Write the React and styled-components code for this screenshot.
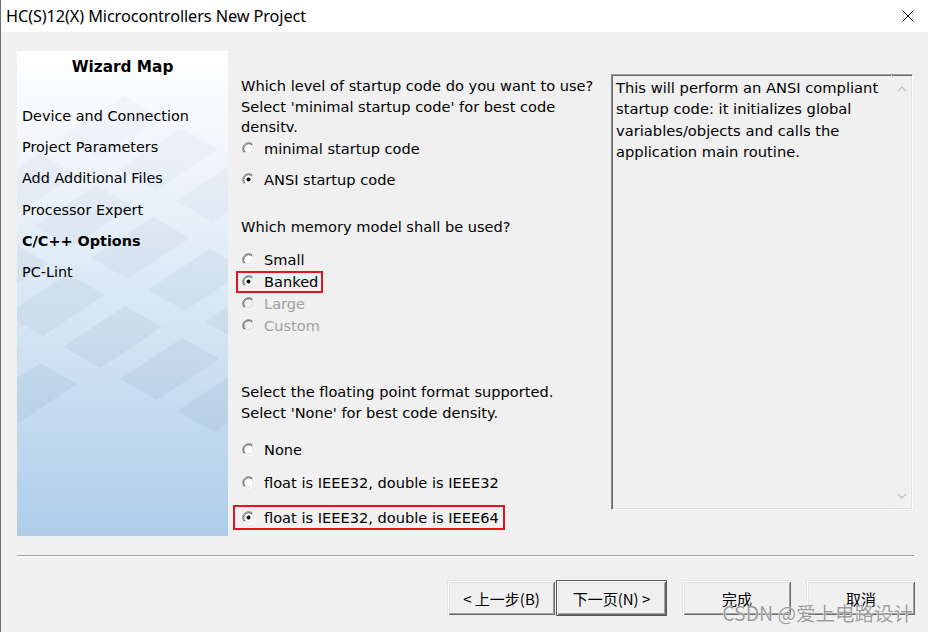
import React from "react";
import styled, { createGlobalStyle } from "styled-components";

const GlobalStyle = createGlobalStyle`
  html, body {
    margin: 0;
    padding: 0;
    background: #f0f0f0;
  }
  body {
    font-family: "DejaVu Sans", "Noto Sans CJK SC", sans-serif;
  }
`;

const Radio = ({ checked, disabled }) => (
  <svg width="13" height="13" viewBox="0 0 13 13">
    <circle cx="6.5" cy="6.5" r="6" fill={disabled ? "#f0f0f0" : "#fff"} />
    <path d="M2.26 10.74 A6 6 0 0 1 10.74 2.26" stroke="#8c8c8c" fill="none" />
    <path d="M2.97 10.03 A5 5 0 0 1 10.03 2.97" stroke="#4f4f4f" fill="none" />
    <path d="M10.74 2.26 A6 6 0 0 1 2.26 10.74" stroke="#ffffff" fill="none" />
    <path d="M10.03 2.97 A5 5 0 0 1 2.97 10.03" stroke="#d8d8d8" fill="none" />
    {checked && <circle cx="6.5" cy="6.5" r="2" fill={disabled ? "#a0a0a0" : "#000"} />}
  </svg>
);

// lattice of faint parallelograms drawn on the wizard map panel
const tiles = [];
for (let i = -4; i <= 4; i++) {
  for (let j = -5; j <= 3; j++) {
    const x = 108 + 57 * i - 85 * j;
    const y = 255 + 32 * i + 57 * j;
    if (y < 40 || y > 330 || x < -60 || x > 260) continue;
    const pts = [
      [x, y],
      [x + 37, y + 21],
      [x + 37 - 62, y + 21 + 41],
      [x - 62, y + 41],
    ]
      .map((p) => p.join(","))
      .join(" ");
    const op = 0.04 + Math.min(1, Math.max(0, (y - 40) / 260)) * 0.06;
    tiles.push(<polygon key={`${i}_${j}`} points={pts} fillOpacity={op} />);
  }
}

export default function App() {
  return (
    <>
      <GlobalStyle />
      <Window>
        <TitleBar>
          <Title>HC(S)12(X) Microcontrollers New Project</Title>
          <CloseBtn>
            <svg width="12" height="12" viewBox="0 0 12 12">
              <path d="M0.5 0.5 L11.5 11.5 M11.5 0.5 L0.5 11.5" stroke="#000" strokeWidth="1" />
            </svg>
          </CloseBtn>
        </TitleBar>
        <Body>
          <Main>
            <WizardPanel>
              <Pattern width="211" height="485" viewBox="0 0 211 485">
                <g fill="#6f86a2">{tiles}</g>
              </Pattern>
              <MapTitle>Wizard Map</MapTitle>
              <MapList>
                <MapItem>Device and Connection</MapItem>
                <MapItem>Project Parameters</MapItem>
                <MapItem>Add Additional Files</MapItem>
                <MapItem>Processor Expert</MapItem>
                <MapItem $active>C/C++ Options</MapItem>
                <MapItem>PC-Lint</MapItem>
              </MapList>
            </WizardPanel>

            <Options>
              <Question $lh={20.5}>
                Which level of startup code do you want to use?
                <br />
                Select 'minimal startup code' for best code
                <br />
                densitv.
              </Question>
              <Option>
                <Radio />
                <span>minimal startup code</span>
              </Option>
              <Option $mt={9}>
                <Radio checked />
                <span>ANSI startup code</span>
              </Option>

              <Question $mt={25}>Which memory model shall be used?</Question>
              <Option $mt={12}>
                <Radio />
                <span>Small</span>
              </Option>
              <Option $box={{ ml: -5, pl: 4, pr: 3 }}>
                <Radio checked />
                <span>Banked</span>
              </Option>
              <Option $disabled>
                <Radio disabled />
                <span>Large</span>
              </Option>
              <Option $disabled>
                <Radio disabled />
                <span>Custom</span>
              </Option>

              <Question $mt={44}>
                Select the floating point format supported.
                <br />
                Select 'None' for best code density.
              </Question>
              <Option $mt={16}>
                <Radio />
                <span>None</span>
              </Option>
              <Option $mt={11}>
                <Radio />
                <span>float is IEEE32, double is IEEE32</span>
              </Option>
              <Option $mt={11} $h={25} $box={{ ml: -8, pl: 7, pr: 4 }}>
                <Radio checked />
                <span>float is IEEE32, double is IEEE64</span>
              </Option>
            </Options>

            <DescBox>
              <DescText>
                This will perform an ANSI compliant
                <br />
                startup code: it initializes global
                <br />
                variables/objects and calls the
                <br />
                application main routine.
              </DescText>
              <ScrollBar>
                <svg width="10" height="6" viewBox="0 0 10 6">
                  <path d="M1 5 L5 1 L9 5" stroke="#c4c4c4" strokeWidth="1.4" fill="none" />
                </svg>
                <svg width="10" height="6" viewBox="0 0 10 6">
                  <path d="M1 1 L5 5 L9 1" stroke="#c4c4c4" strokeWidth="1.4" fill="none" />
                </svg>
              </ScrollBar>
            </DescBox>
          </Main>

          <Separator />

          <ButtonRow>
            <ButtonGroup>
              <Button $w={109}>&lt;&nbsp;上一步(B)</Button>
              <Button $w={111} $default>
                下一页(N)&nbsp;&gt;
              </Button>
            </ButtonGroup>
            <Button $w={110}>完成</Button>
            <Button $w={110}>取消</Button>
          </ButtonRow>
        </Body>
        <Watermark>CSDN @爱上电路设计</Watermark>
      </Window>
    </>
  );
}

const Window = styled.div`
  position: relative;
  width: 928px;
  height: 632px;
  box-sizing: border-box;
  border-left: 1px solid #6d6d6d;
  background: #f0f0f0;
  display: flex;
  flex-direction: column;
  overflow: hidden;
`;

const TitleBar = styled.div`
  height: 32px;
  flex: none;
  background: #ffffff;
  display: flex;
  align-items: center;
  justify-content: space-between;
  padding: 0 14px 0 5px;
`;

const Title = styled.div`
  font-family: "Noto Sans", "Liberation Sans", sans-serif;
  font-size: 16.3px;
  color: #000;
  letter-spacing: -0.1px;
`;

const CloseBtn = styled.div`
  width: 12px;
  height: 12px;
  display: flex;
`;

const Body = styled.div`
  flex: 1;
  padding: 19px 14px 0 16px;
  display: flex;
  flex-direction: column;
`;

const Main = styled.div`
  display: flex;
  height: 485px;
`;

const WizardPanel = styled.div`
  position: relative;
  width: 211px;
  flex: none;
  background: linear-gradient(
    180deg,
    #ffffff 0%,
    #f6f9fc 14%,
    #e2edf7 40%,
    #d3e4f3 58%,
    #aecde9 100%
  );
  overflow: hidden;
`;

const Pattern = styled.svg`
  position: absolute;
  inset: 0;
`;

const MapTitle = styled.div`
  position: relative;
  text-align: center;
  font-size: 15.3px;
  font-weight: bold;
  color: #000;
  margin-top: 6px;
  line-height: 20px;
`;

const MapList = styled.div`
  position: relative;
  display: flex;
  flex-direction: column;
  margin-top: 24px;
  padding-left: 5px;
`;

const MapItem = styled.div`
  height: 31.2px;
  line-height: 31px;
  font-size: 14.4px;
  font-weight: ${(p) => (p.$active ? "bold" : "normal")};
  color: #000;
  white-space: nowrap;
`;

const Options = styled.div`
  width: 370px;
  flex: none;
  padding: 25px 0 0 13px;
  display: flex;
  flex-direction: column;
  font-size: 14.6px;
  color: #000;
`;

const Question = styled.div`
  margin-top: ${(p) => p.$mt || 0}px;
  line-height: ${(p) => p.$lh || 21}px;
  white-space: nowrap;
`;

const Option = styled.div`
  margin-top: ${(p) => p.$mt || 0}px;
  height: ${(p) => p.$h || 22}px;
  box-sizing: border-box;
  display: flex;
  align-items: center;
  gap: 9px;
  white-space: nowrap;
  color: ${(p) => (p.$disabled ? "#a0a0a0" : "#000")};
  padding-left: 1px;
  ${(p) =>
    p.$box &&
    `
    align-self: flex-start;
    margin-left: ${p.$box.ml}px;
    padding-left: ${p.$box.pl}px;
    padding-right: ${p.$box.pr}px;
    border: 2px solid #e3141f;
  `}
  svg {
    flex: none;
  }
`;

const DescBox = styled.div`
  margin-top: 23px;
  width: 302px;
  height: 436px;
  flex: none;
  box-sizing: border-box;
  display: flex;
  border-top: 1px solid #a0a0a0;
  border-left: 1px solid #8a8a8a;
  border-right: 1px solid #ffffff;
  border-bottom: 1px solid #ffffff;
  box-shadow: inset 1px 1px #696969, inset -1px -1px #e3e3e3;
`;

const DescText = styled.div`
  flex: 1;
  padding: 2px 0 0 4px;
  font-size: 14.7px;
  line-height: 21.3px;
  color: #000;
  white-space: nowrap;
`;

const ScrollBar = styled.div`
  width: 20px;
  flex: none;
  border-left: 1px solid #f7f7f7;
  display: flex;
  flex-direction: column;
  justify-content: space-between;
  align-items: center;
  padding: 11px 0 9px;
  margin-bottom: 1px;
`;

const Separator = styled.div`
  margin-top: 19px;
  height: 0;
  border-top: 1px solid #a0a0a0;
  border-bottom: 1px solid #ffffff;
`;

const ButtonRow = styled.div`
  margin-top: 23px;
  margin-right: -2px;
  display: flex;
  justify-content: flex-end;
  gap: 14px;
`;

const ButtonGroup = styled.div`
  display: flex;
  margin-right: 1px;
`;

const Button = styled.div`
  width: ${(p) => p.$w}px;
  height: 36px;
  box-sizing: border-box;
  display: flex;
  align-items: center;
  justify-content: center;
  font-family: "Noto Sans CJK SC", "DejaVu Sans", sans-serif;
  font-size: 15px;
  color: #000;
  background: #f0f0f0;
  border: 1px solid ${(p) => (p.$default ? "#5a5a5a" : "transparent")};
  box-shadow: inset 1px 1px #ffffff, inset -1px -1px #696969,
    inset 2px 2px #e3e3e3, inset -2px -2px #a0a0a0;
  ${(p) => !p.$default && "border-left-color: #e3e3e3; border-top-color: #e3e3e3;"}
`;

const Watermark = styled.div`
  position: absolute;
  right: 15px;
  bottom: 5px;
  font-family: "Noto Sans CJK SC", "Noto Sans", sans-serif;
  font-size: 19.5px;
  color: rgba(110, 110, 110, 0.7);
  text-shadow: 0 0 1px #ffffff, 0 0 1px #ffffff;
  pointer-events: none;
`;
